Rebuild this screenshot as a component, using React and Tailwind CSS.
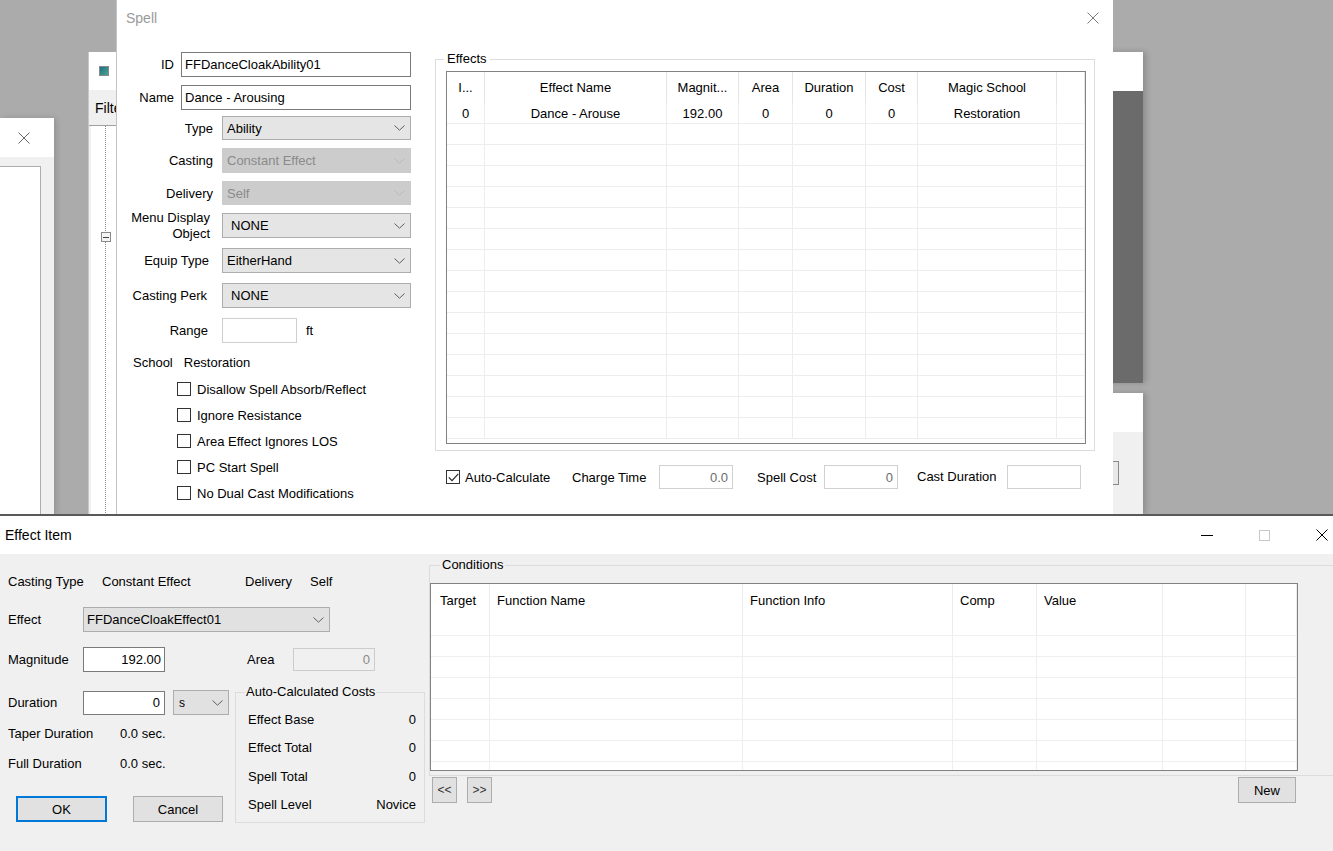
import React from "react";

const Chevron = ({ disabled }) => (
  <svg width="11" height="6" viewBox="0 0 11 6" className="shrink-0">
    <path d="M0.5 0.5 L5.5 5.2 L10.5 0.5" fill="none" stroke={disabled ? "#b8b8b8" : "#5f5f5f"} strokeWidth="1" />
  </svg>
);

const XIcon = ({ color = "#000", size = 12 }) => (
  <svg width={size} height={size} viewBox="0 0 12 12" className="shrink-0">
    <path d="M0.5 0.5 L11.5 11.5 M11.5 0.5 L0.5 11.5" stroke={color} strokeWidth="1" fill="none" />
  </svg>
);

const Check = ({ checked }) => (
  <div className="w-[14px] h-[14px] border border-[#333333] bg-white flex items-center justify-center shrink-0">
    {checked && (
      <svg width="11" height="9" viewBox="0 0 11 9">
        <path d="M0.8 4.3 L4 7.6 L10.3 0.8" fill="none" stroke="#222" strokeWidth="1.1" />
      </svg>
    )}
  </div>
);

function Combo({ className = "", value, disabled, textClass = "pl-[4px]", light }) {
  const look = disabled
    ? "bg-[#cccccc] border-[#cccccc] text-[#8a8a8a]"
    : light
    ? "bg-[#e1e1e1] border-[#adadad]"
    : "bg-[#e5e5e5] border-[#adadad]";
  return (
    <div className={`flex items-center justify-between pr-[5px] border ${look} ${className}`}>
      <span className={textClass}>{value}</span>
      <Chevron disabled={disabled} />
    </div>
  );
}

const effCols = "grid grid-cols-[38px_182px_72px_54px_73px_52px_139px_1fr]";
const condCols = "grid grid-cols-[59px_253px_210px_84px_126px_83px_1fr]";

function EffectsTable() {
  const head = ["I...", "Effect Name", "Magnit...", "Area", "Duration", "Cost", "Magic School", ""];
  const row0 = ["0", "Dance - Arouse", "192.00", "0", "0", "0", "Restoration", ""];
  const rows = Array.from({ length: 16 });
  return (
    <div className="ml-[10px] mt-[11px] w-[640px] h-[373px] border border-[#828282] bg-white overflow-hidden">
      <div className={`${effCols} h-[31px]`}>
        {head.map((h, i) => (
          <div key={i} className="flex items-center justify-center border-r border-[#e5e5e5]">
            {h}
          </div>
        ))}
      </div>
      {rows.map((_, r) => (
        <div key={r} className={`${effCols} h-[21px]`}>
          {row0.map((c, i) => (
            <div key={i} className="flex items-center justify-center border-r border-b border-[#ededed]">
              {r === 0 ? c : ""}
            </div>
          ))}
        </div>
      ))}
    </div>
  );
}

function ConditionsTable() {
  const head = ["Target", "Function Name", "Function Info", "Comp", "Value", "", ""];
  const rows = Array.from({ length: 7 });
  return (
    <div className="mt-[17px] w-[868px] h-[188px] border border-[#828282] bg-white overflow-hidden">
      <div className={`${condCols} h-[52px] border-b border-[#f0f0f0]`}>
        {head.map((h, i) => (
          <div key={i} className={`pt-[10px] border-r border-[#ececec] ${i === 0 ? "pl-[9px]" : "pl-[7px]"}`}>
            {h}
          </div>
        ))}
      </div>
      {rows.map((_, r) => (
        <div key={r} className={`${condCols} h-[21px]`}>
          {head.map((_, i) => (
            <div key={i} className="border-r border-b border-[#efefef]" />
          ))}
        </div>
      ))}
    </div>
  );
}

export default function App() {
  return (
    <div className="relative w-[1333px] h-[851px] overflow-hidden bg-[#ababab] font-['Liberation_Sans',Arial,sans-serif] text-[13px] leading-none text-black">
      {/* Background window A (left) */}
      <div className="absolute left-0 top-[118px] w-[54px] h-[397px] bg-[#f0f0f0] flex flex-col shadow-[2px_0_6px_rgba(0,0,0,0.15)]">
        <div className="h-[39px] bg-white flex items-center justify-end pr-[24px]">
          <XIcon color="#666" size={12} />
        </div>
        <div className="mt-[9px] w-[41px] flex-1 bg-white border-t border-r border-[#adadad]" />
      </div>

      {/* Background window B (middle left) */}
      <div className="absolute left-[88px] top-[52px] w-[70px] h-[463px] bg-[#f0f0f0] flex flex-col border-l border-[#c8c8c8]">
        <div className="h-[38px] bg-white flex items-center pl-[10px]">
          <div className="w-[10px] h-[10px] border border-[#8a8a8a] bg-gradient-to-br from-[#1d6f86] to-[#4ca38a]" />
        </div>
        <div className="h-[36px] flex items-center pl-[6px] border-b border-[#a0a0a0] text-[14px]">Filter</div>
        <div className="relative flex-1 ml-[2px] bg-white">
          <div className="ml-[14px] h-full border-l border-dotted border-[#8c8c8c]" />
          <div className="absolute left-[10px] top-[106px] w-[10px] h-[10px] border border-[#8a8a8a] bg-[#f4f4f4] flex items-center justify-center">
            <div className="w-[6px] h-[1px] bg-[#444]" />
          </div>
        </div>
      </div>

      {/* Background window C (right top) */}
      <div className="absolute left-[1090px] top-[52px] w-[53px] h-[331px] flex flex-col shadow-[3px_0_6px_rgba(0,0,0,0.18)]">
        <div className="h-[39px] bg-white" />
        <div className="flex-1 bg-[#6b6b6b]" />
      </div>

      {/* Background window D (right bottom) */}
      <div className="absolute left-[1080px] top-[393px] w-[63px] h-[122px] flex flex-col shadow-[3px_0_6px_rgba(0,0,0,0.18)]">
        <div className="h-[39px] bg-white" />
        <div className="flex-1 bg-[#f0f0f0] pt-[29px]">
          <div className="ml-[8px] w-[31px] h-[24px] border border-[#8a8a8a] bg-[#e8e8e8]" />
        </div>
      </div>

      {/* Spell dialog */}
      <div className="absolute left-[116px] top-0 w-[997px] h-[515px] bg-white border-l border-[#c4c4c4] flex flex-col">
        <div className="h-[35px] shrink-0 flex items-center justify-between pl-[9px] pr-[14px]">
          <span className="text-[14px] text-[#9a9a9a]">Spell</span>
          <XIcon color="#7a7a7a" size={12} />
        </div>
        <div className="flex flex-1">
          {/* Left form */}
          <div className="w-[318px] shrink-0 pl-[10px] flex flex-col">
            <div className="mt-[17px] h-[25px] flex items-center">
              <div className="w-[47px] text-right">ID</div>
              <div className="ml-[7px] w-[230px] h-[25px] border border-[#7a7a7a] flex items-center pl-[3px]">FFDanceCloakAbility01</div>
            </div>
            <div className="mt-[8px] h-[25px] flex items-center">
              <div className="w-[47px] text-right">Name</div>
              <div className="ml-[7px] w-[230px] h-[25px] border border-[#7a7a7a] flex items-center pl-[3px]">Dance - Arousing</div>
            </div>
            <div className="mt-[6px] h-[24px] flex items-center">
              <div className="w-[86px] text-right">Type</div>
              <Combo className="ml-[9px] w-[189px] h-[24px]" value="Ability" />
            </div>
            <div className="mt-[8px] h-[25px] flex items-center">
              <div className="w-[86px] text-right">Casting</div>
              <Combo className="ml-[9px] w-[189px] h-[25px]" value="Constant Effect" disabled />
            </div>
            <div className="mt-[8px] h-[24px] flex items-center">
              <div className="w-[86px] text-right">Delivery</div>
              <Combo className="ml-[9px] w-[189px] h-[24px]" value="Self" disabled />
            </div>
            <div className="mt-[8px] h-[25px] flex items-center">
              <div className="w-[83px] text-right leading-[16px]">
                Menu Display
                <br />
                Object
              </div>
              <Combo className="ml-[12px] w-[189px] h-[25px]" value="NONE" textClass="pl-[8px]" />
            </div>
            <div className="mt-[10px] h-[25px] flex items-center">
              <div className="w-[82px] text-right">Equip Type</div>
              <Combo className="ml-[13px] w-[189px] h-[25px]" value="EitherHand" />
            </div>
            <div className="mt-[10px] h-[25px] flex items-center">
              <div className="w-[80px] text-right">Casting Perk</div>
              <Combo className="ml-[15px] w-[189px] h-[25px]" value="NONE" textClass="pl-[8px]" />
            </div>
            <div className="mt-[10px] h-[25px] flex items-center">
              <div className="w-[81px] text-right">Range</div>
              <div className="ml-[14px] w-[75px] h-[25px] border border-[#cfcfcf] bg-white" />
              <div className="ml-[9px]">ft</div>
            </div>
            <div className="mt-[9px] h-[20px] flex items-center pl-[6px]">
              <span>School</span>
              <span className="ml-[11px]">Restoration</span>
            </div>
            <div className="mt-[4px] flex flex-col pl-[50px]">
              {[
                "Disallow Spell Absorb/Reflect",
                "Ignore Resistance",
                "Area Effect Ignores LOS",
                "PC Start Spell",
                "No Dual Cast Modifications",
              ].map((t) => (
                <div key={t} className="h-[26px] flex items-center">
                  <Check />
                  <span className="ml-[6px]">{t}</span>
                </div>
              ))}
            </div>
          </div>

          {/* Effects column */}
          <div className="flex flex-col">
            <div className="relative mt-[24px] w-[660px] h-[392px] border border-[#dcdcdc]">
              <span className="absolute -top-[8px] left-[8px] px-[3px] bg-white">Effects</span>
              <EffectsTable />
            </div>
            <div className="mt-[14px] h-[24px] flex items-center pl-[11px]">
              <Check checked />
              <div className="ml-[5px] w-[107px]">Auto-Calculate</div>
              <div className="w-[87px]">Charge Time</div>
              <div className="w-[74px] h-[24px] border border-[#d0d0d0] bg-white flex items-center justify-end pr-[4px] text-[#6d6d6d]">0.0</div>
              <div className="ml-[24px] w-[67px]">Spell Cost</div>
              <div className="w-[74px] h-[24px] border border-[#d0d0d0] bg-white flex items-center justify-end pr-[4px] text-[#6d6d6d]">0</div>
              <div className="ml-[19px] w-[90px] -mt-[2px]">Cast Duration</div>
              <div className="w-[74px] h-[24px] border border-[#d0d0d0] bg-white" />
            </div>
          </div>
        </div>
      </div>

      {/* Effect Item window */}
      <div className="absolute left-0 top-[514px] w-[1333px] h-[337px] flex flex-col border-t-2 border-[#595959] bg-[#f0f0f0] overflow-hidden">
        <div className="h-[38px] shrink-0 bg-white flex items-center pl-[5px]">
          <span className="text-[14px]">Effect Item</span>
          <div className="ml-auto flex items-center gap-[46px] pr-[5px]">
            <div className="w-[12px] h-[1px] bg-black" />
            <div className="w-[11px] h-[11px] border border-[#c8c8c8]" />
            <XIcon color="#000" size={12} />
          </div>
        </div>
        <div className="flex flex-1">
          {/* Left panel */}
          <div className="w-[429px] shrink-0 pl-[8px] flex flex-col">
            <div className="mt-[17px] h-[20px] flex items-center">
              <div className="w-[94px]">Casting Type</div>
              <div className="w-[143px]">Constant Effect</div>
              <div className="w-[65px]">Delivery</div>
              <div>Self</div>
            </div>
            <div className="mt-[16px] h-[25px] flex items-center">
              <div className="w-[75px]">Effect</div>
              <Combo className="w-[247px] h-[25px]" value="FFDanceCloakEffect01" light textClass="pl-[3px]" />
            </div>
            <div className="mt-[15px] flex">
              <div className="w-[227px] flex flex-col">
                <div className="h-[25px] flex items-center">
                  <div className="w-[75px]">Magnitude</div>
                  <div className="w-[82px] h-[25px] border border-[#7a7a7a] bg-white flex items-center justify-end pr-[3px]">192.00</div>
                </div>
                <div className="mt-[18px] h-[25px] flex items-center">
                  <div className="w-[75px]">Duration</div>
                  <div className="w-[82px] h-[24px] border border-[#7a7a7a] bg-white flex items-center justify-end pr-[4px]">0</div>
                  <Combo className="ml-[8px] w-[56px] h-[25px]" value="s" light textClass="pl-[5px] text-[12px]" />
                </div>
                <div className="mt-[8px] h-[20px] flex items-center">
                  <div className="w-[112px]">Taper Duration</div>
                  <div>0.0 sec.</div>
                </div>
                <div className="mt-[10px] h-[20px] flex items-center">
                  <div className="w-[112px]">Full Duration</div>
                  <div>0.0 sec.</div>
                </div>
                <div className="mt-[23px] h-[26px] flex items-center">
                  <div className="ml-[8px] w-[91px] h-[26px] border-2 border-[#0078d7] bg-[#e1e1e1] flex items-center justify-center">OK</div>
                  <div className="ml-[26px] w-[90px] h-[26px] border border-[#adadad] bg-[#e1e1e1] flex items-center justify-center">Cancel</div>
                </div>
              </div>
              <div className="w-[190px] flex flex-col">
                <div className="h-[25px] flex items-center">
                  <div className="ml-[12px] w-[46px]">Area</div>
                  <div className="w-[82px] h-[23px] border border-[#cccccc] bg-[#f0f0f0] flex items-center justify-end pr-[4px] text-[#8a8a8a]">0</div>
                </div>
                <div className="relative mt-[20px] w-[190px] h-[131px] border border-[#dcdcdc] flex flex-col px-[12px]">
                  <span className="absolute -top-[8px] left-[9px] px-[1px] bg-[#f0f0f0]">Auto-Calculated Costs</span>
                  <div className="mt-[16px] h-[20px] flex items-center justify-between">
                    <span>Effect Base</span>
                    <span className="-mr-[4px]">0</span>
                  </div>
                  <div className="mt-[8px] h-[20px] flex items-center justify-between">
                    <span>Effect Total</span>
                    <span className="-mr-[4px]">0</span>
                  </div>
                  <div className="mt-[9px] h-[20px] flex items-center justify-between">
                    <span>Spell Total</span>
                    <span className="-mr-[4px]">0</span>
                  </div>
                  <div className="mt-[8px] h-[20px] flex items-center justify-between">
                    <span>Spell Level</span>
                    <span className="-mr-[4px]">Novice</span>
                  </div>
                </div>
              </div>
            </div>
          </div>

          {/* Conditions panel */}
          <div className="w-[904px] shrink-0 flex flex-col">
            <div className="relative mt-[11px] w-[920px] h-[211px] border border-[#dcdcdc]">
              <span className="absolute -top-[8px] left-[10px] px-[2px] bg-[#f0f0f0]">Conditions</span>
              <ConditionsTable />
            </div>
            <div className="mt-[1px] h-[26px] flex items-center">
              <div className="ml-[3px] w-[25px] h-[26px] border border-[#adadad] bg-[#e1e1e1] flex items-center justify-center text-[12px] text-[#333]">&lt;&lt;</div>
              <div className="ml-[10px] w-[25px] h-[26px] border border-[#adadad] bg-[#e1e1e1] flex items-center justify-center text-[12px] text-[#333]">&gt;&gt;</div>
              <div className="ml-auto mr-[37px] w-[58px] h-[26px] border border-[#adadad] bg-[#e1e1e1] flex items-center justify-center">New</div>
            </div>
          </div>
        </div>
      </div>
    </div>
  );
}
